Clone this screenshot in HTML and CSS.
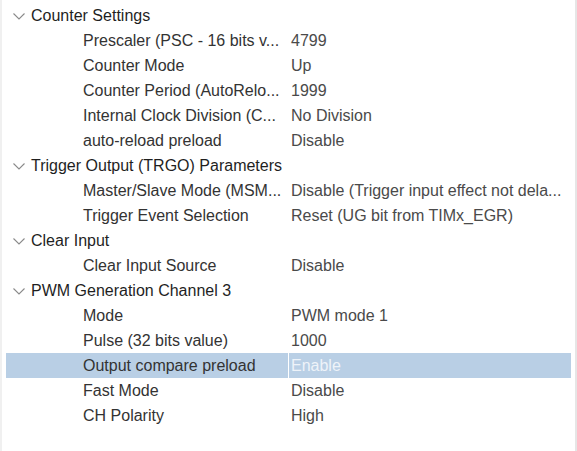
FILE: index.html
```html
<!DOCTYPE html>
<html lang="en">
<head>
  <meta charset="UTF-8">
  <title>Parameter Settings</title>
  <link rel="stylesheet" href="styles.css">
</head>
<body>
  <div class="panel">
    <div class="tree">
      <div class="row group"><span class="chev"><svg width="12" height="7" viewBox="0 0 12 7"><path d="M0.5 0.5 L6 6 L11.5 0.5" fill="none" stroke="#8a8a8a" stroke-width="1.1"/></svg></span><span class="name">Counter Settings</span></div>
      <div class="row"><span class="lbl">Prescaler (PSC - 16 bits v...</span><span class="val">4799</span></div>
      <div class="row"><span class="lbl">Counter Mode</span><span class="val">Up</span></div>
      <div class="row"><span class="lbl">Counter Period (AutoRelo...</span><span class="val">1999</span></div>
      <div class="row"><span class="lbl">Internal Clock Division (C...</span><span class="val">No Division</span></div>
      <div class="row"><span class="lbl">auto-reload preload</span><span class="val">Disable</span></div>

      <div class="row group"><span class="chev"><svg width="12" height="7" viewBox="0 0 12 7"><path d="M0.5 0.5 L6 6 L11.5 0.5" fill="none" stroke="#8a8a8a" stroke-width="1.1"/></svg></span><span class="name">Trigger Output (TRGO) Parameters</span></div>
      <div class="row"><span class="lbl">Master/Slave Mode (MSM...</span><span class="val">Disable (Trigger input effect not dela...</span></div>
      <div class="row"><span class="lbl">Trigger Event Selection</span><span class="val">Reset (UG bit from TIMx_EGR)</span></div>

      <div class="row group"><span class="chev"><svg width="12" height="7" viewBox="0 0 12 7"><path d="M0.5 0.5 L6 6 L11.5 0.5" fill="none" stroke="#8a8a8a" stroke-width="1.1"/></svg></span><span class="name">Clear Input</span></div>
      <div class="row"><span class="lbl">Clear Input Source</span><span class="val">Disable</span></div>

      <div class="row group"><span class="chev"><svg width="12" height="7" viewBox="0 0 12 7"><path d="M0.5 0.5 L6 6 L11.5 0.5" fill="none" stroke="#8a8a8a" stroke-width="1.1"/></svg></span><span class="name">PWM Generation Channel 3</span></div>
      <div class="row"><span class="lbl">Mode</span><span class="val">PWM mode 1</span></div>
      <div class="row"><span class="lbl">Pulse (32 bits value)</span><span class="val">1000</span></div>
      <div class="row selected"><span class="lbl">Output compare preload</span><span class="val">Enable</span></div>
      <div class="row"><span class="lbl">Fast Mode</span><span class="val">Disable</span></div>
      <div class="row"><span class="lbl">CH Polarity</span><span class="val">High</span></div>
    </div>
  </div>
</body>
</html>
```

FILE: styles.css
```css
body {
  margin: 0;
  background: #ffffff;
  font-family: "Liberation Sans", Arial, sans-serif;
  font-size: 16px;
}
.panel {
  height: 451px;
  box-sizing: border-box;
  border-left: 2px solid #f0f0f0;
  border-right: 2px solid #e6e6e6;
  width: 577px;
  padding: 3px 4px 0 4px;
}
.tree {
  width: 565px;
}
.row {
  display: flex;
  height: 25px;
  line-height: 25px;
  white-space: nowrap;
}
.group {
  color: #1f1f1f;
}
.chev {
  width: 25px;
  display: flex;
  align-items: center;
  justify-content: center;
  padding-top: 1px;
  box-sizing: border-box;
}
.chev svg {
  display: block;
}
.lbl {
  width: 283px;
  box-sizing: border-box;
  padding-left: 77px;
  color: #333333;
  overflow: hidden;
  border-right: 1px solid transparent;
}
.val {
  flex: 1;
  padding-left: 2px;
  color: #4a4a4a;
  overflow: hidden;
}
.selected .lbl,
.selected .val {
  background-color: #b9cfe5;
}
.selected .lbl {
  border-right-color: #ffffff;
  color: #333333;
}
.selected .val {
  color: #eef3f9;
}
```
